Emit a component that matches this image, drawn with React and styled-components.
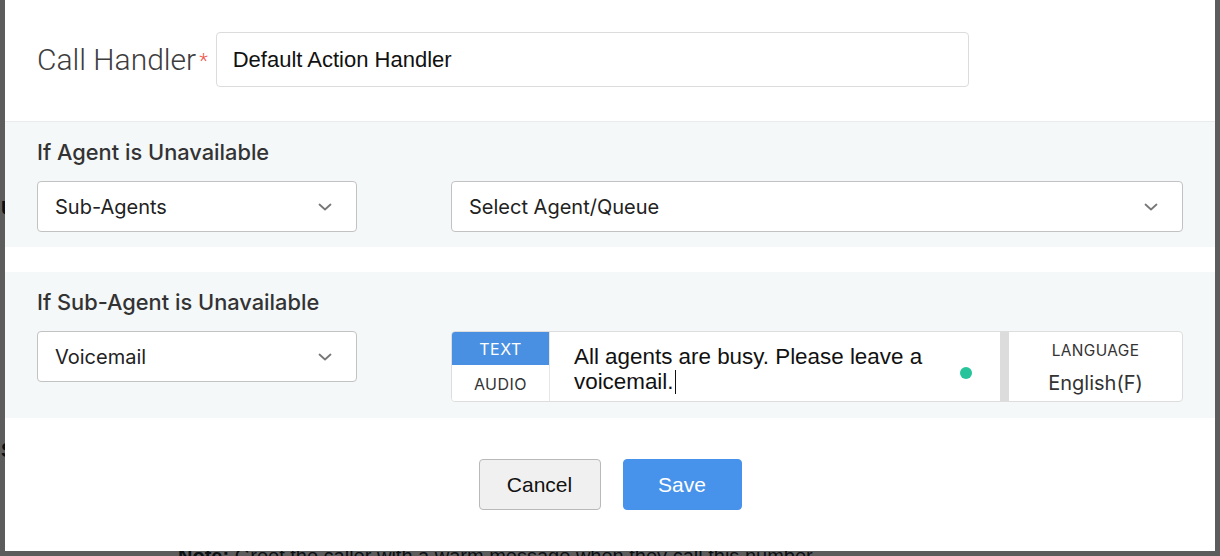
import React from "react";
import styled, { createGlobalStyle } from "styled-components";

const GlobalStyle = createGlobalStyle`
	html, body {
		margin: 0;
		padding: 0;
		height: 100%;
		background: #fff;
		font-family: "Liberation Sans", Arial, sans-serif;
	}
	#root {
		height: 100%;
	}
`;

const Page = styled.div`
	position: relative;
	height: 556px;
	overflow: hidden;
	background: #fff;
`;

const BehindContent = styled.div`
	display: flex;
	flex-direction: column;
	padding-left: 1px;
	color: #1b2a36;
	font: 20px "Liberation Sans", Arial, sans-serif;
`;

const BehindHeading = styled.div`
	margin-top: ${(p) => p.top}px;
	font-weight: 600;
	line-height: 24px;
`;

const BehindNote = styled.div`
	margin-top: 82px;
	padding-left: 177px;
	line-height: 24px;
	white-space: nowrap;

	b {
		font-weight: 700;
	}
`;

const Overlay = styled.div`
	position: absolute;
	inset: 0;
	background: rgba(0, 0, 0, 0.64);
`;

const Modal = styled.div`
	position: absolute;
	top: 0;
	left: 5px;
	width: 1210px;
	height: 551px;
	background: #fff;
	display: flex;
	flex-direction: column;
`;

const Header = styled.div`
	display: flex;
	align-items: center;
	padding: 32px 32px 34px;
`;

const HeaderLabel = styled.label`
	flex-shrink: 0;
	font: 300 30px Roboto, "Liberation Sans", sans-serif;
	color: #3d3d3d;
	margin-right: 8px;
	white-space: nowrap;
`;

const Required = styled.span`
	color: #f0574b;
	font-size: 20px;
	margin-left: 3px;
	vertical-align: 2px;
`;

const TextInput = styled.div`
	box-sizing: border-box;
	width: 753px;
	height: 55px;
	border: 1px solid #dcdcdc;
	border-radius: 4px;
	padding-left: 16px;
	display: flex;
	align-items: center;
	font: 22px "Liberation Sans", Arial, sans-serif;
	color: #111;
`;

const Section = styled.div`
	background: #f5f8f9;
	border-top: ${(p) => (p.bordered ? "1px solid #e8ecee" : "none")};
	margin-top: ${(p) => p.gap || 0}px;
	padding: 17px 32px ${(p) => p.bottom}px;
`;

const SectionTitle = styled.div`
	font: 500 21.8px Inter, "Noto Sans", sans-serif;
	color: #333;
	line-height: 26px;
	margin-bottom: 16px;
`;

const Row = styled.div`
	display: flex;
	align-items: flex-start;
	gap: 94px;
`;

const Select = styled.div`
	box-sizing: border-box;
	width: ${(p) => p.width}px;
	height: 51px;
	background: #fff;
	border: 1px solid #c2c2c2;
	border-radius: 4px;
	padding: 0 23px 0 17px;
	display: flex;
	align-items: center;
	justify-content: space-between;
	font: 20px Inter, "Noto Sans", sans-serif;
	color: #222;
`;

const Chevron = () => (
	<svg width="16" height="10" viewBox="0 0 16 10">
		<path d="M2.5 2.5 L8 7.5 L13.5 2.5" fill="none" stroke="#777" strokeWidth="1.8" strokeLinecap="round" strokeLinejoin="round" />
	</svg>
);

const MessageBox = styled.div`
	box-sizing: border-box;
	width: 732px;
	height: 71px;
	background: #fff;
	border: 1px solid #dddddd;
	border-radius: 4px;
	display: flex;
	overflow: hidden;
`;

const Tabs = styled.div`
	width: 97px;
	border-right: 1px solid #e6e6e6;
	display: flex;
	flex-direction: column;
`;

const Tab = styled.div`
	height: ${(p) => (p.active ? 34 : 35)}px;
	display: flex;
	align-items: center;
	justify-content: center;
	font: 16px Inter, "Noto Sans", sans-serif;
	letter-spacing: 0.5px;
	background: ${(p) => (p.active ? "#4a90e2" : "#fff")};
	color: ${(p) => (p.active ? "#fff" : "#333")};
	padding-top: ${(p) => (p.active ? 0 : 2)}px;
`;

const MessageText = styled.div`
	position: relative;
	flex: 1;
	padding: 12px 60px 0 24px;
	font: 22.4px/25px "Liberation Sans", Arial, sans-serif;
	color: #111;
`;

const Caret = styled.span`
	display: inline-block;
	width: 1.5px;
	height: 24px;
	background: #111;
	vertical-align: -5px;
	margin-left: 1px;
`;

const StatusDot = styled.span`
	position: absolute;
	right: 28px;
	top: 35px;
	width: 12px;
	height: 12px;
	border-radius: 50%;
	background: #27c39b;
`;

const Divider = styled.div`
	width: 9px;
	background: #dcdcdc;
`;

const Language = styled.div`
	width: 173px;
	display: flex;
	flex-direction: column;
	align-items: center;
	padding-top: 9px;
	font-family: Inter, "Noto Sans", sans-serif;
	color: #333;
`;

const LanguageLabel = styled.div`
	font-size: 15.4px;
	letter-spacing: 0.4px;
	line-height: 20px;
`;

const LanguageValue = styled.div`
	font-size: 20px;
	line-height: 24px;
	margin-top: 10px;
`;

const Footer = styled.div`
	display: flex;
	justify-content: center;
	gap: 22px;
	padding-top: 41px;
`;

const Button = styled.button`
	box-sizing: border-box;
	width: ${(p) => (p.primary ? 119 : 122)}px;
	height: 51px;
	border-radius: 4px;
	border: 1px solid ${(p) => (p.primary ? "#4793ec" : "#b9b9b9")};
	background: ${(p) => (p.primary ? "#4793ec" : "#f0f0f0")};
	color: ${(p) => (p.primary ? "#fff" : "#111")};
	font: 21px "Liberation Sans", Arial, sans-serif;
	cursor: pointer;
`;

export default function App() {
	return (
		<Page>
			<GlobalStyle />
			<BehindContent>
				<BehindHeading top={196}>Unavailable</BehindHeading>
				<BehindHeading top={218}>Settings</BehindHeading>
				<BehindNote>
					<b>Note:</b> Greet the caller with a warm message when they call this number.
				</BehindNote>
			</BehindContent>
			<Overlay />
			<Modal>
				<Header>
					<HeaderLabel>
						Call Handler<Required>*</Required>
					</HeaderLabel>
					<TextInput>Default Action Handler</TextInput>
				</Header>

				<Section bordered bottom={15}>
					<SectionTitle>If Agent is Unavailable</SectionTitle>
					<Row>
						<Select width={320}>
							Sub-Agents
							<Chevron />
						</Select>
						<Select width={732}>
							Select Agent/Queue
							<Chevron />
						</Select>
					</Row>
				</Section>

				<Section gap={25} bottom={16}>
					<SectionTitle>If Sub-Agent is Unavailable</SectionTitle>
					<Row>
						<Select width={320}>
							Voicemail
							<Chevron />
						</Select>
						<MessageBox>
							<Tabs>
								<Tab active>TEXT</Tab>
								<Tab>AUDIO</Tab>
							</Tabs>
							<MessageText>
								All agents are busy. Please leave a voicemail.
								<Caret />
								<StatusDot />
							</MessageText>
							<Divider />
							<Language>
								<LanguageLabel>LANGUAGE</LanguageLabel>
								<LanguageValue>English(F)</LanguageValue>
							</Language>
						</MessageBox>
					</Row>
				</Section>

				<Footer>
					<Button>Cancel</Button>
					<Button primary>Save</Button>
				</Footer>
			</Modal>
		</Page>
	);
}
